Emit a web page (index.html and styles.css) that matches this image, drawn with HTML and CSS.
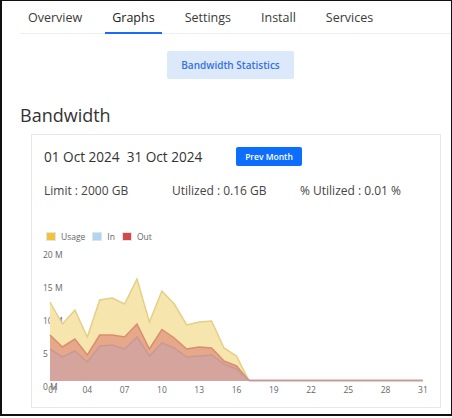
FILE: index.html
```html
<!DOCTYPE html>
<html>
<head>
<meta charset="utf-8">
<link rel="stylesheet" href="styles.css">
</head>
<body>
<div class="frame">
  <nav class="tabs">
    <a class="tab">Overview</a>
    <a class="tab active">Graphs</a>
    <a class="tab">Settings</a>
    <a class="tab">Install</a>
    <a class="tab">Services</a>
  </nav>
  <main class="content">
    <div class="sub">
      <button class="pill">Bandwidth Statistics</button>
    </div>
    <h2 class="title">Bandwidth</h2>
    <section class="card">
      <div class="card-head">
        <span class="dates"><span>01 Oct 2024</span><span>31 Oct 2024</span></span>
        <button class="prev">Prev Month</button>
      </div>
      <div class="stats">
        <span>Limit : 2000 GB</span>
        <span>Utilized : 0.16 GB</span>
        <span>% Utilized : 0.01 %</span>
      </div>
      <div class="legend">
        <span class="item"><i class="sw sw-usage"></i>Usage</span>
        <span class="item"><i class="sw sw-in"></i>In</span>
        <span class="item"><i class="sw sw-out"></i>Out</span>
      </div>
      <svg class="chart" width="408" height="160" viewBox="32 246 408 160">
        <g class="ylab">
          <text x="43" y="257">20 M</text>
          <text x="43" y="290">15 M</text>
          <text x="43" y="323">10 M</text>
          <text x="43" y="356">5 M</text>
          <text x="43" y="389">0 M</text>
        </g>
        <polygon class="a-usage" points="50,382 50,303 62.4,325 74.9,311 87.3,338 99.7,301 112.2,299 124.6,305 137,280 149.4,323 161.9,292 174.3,305 186.7,326 199.2,323 211.6,322 224,349 236.5,357 248.9,381.5 422.9,381.5 422.9,382"/>
        <polyline class="l-usage" points="50,303 62.4,325 74.9,311 87.3,338 99.7,301 112.2,299 124.6,305 137,280 149.4,323 161.9,292 174.3,305 186.7,326 199.2,323 211.6,322 224,349 236.5,357 248.9,381.5"/>
        <polygon class="a-out" points="50,382 50,336 62.4,348 74.9,340 87.3,356 99.7,336 112.2,336 124.6,338 137,325 149.4,350 161.9,330.5 174.3,339 186.7,350 199.2,348 211.6,349 224,362 236.5,367 248.9,381.5 248.9,382"/>
        <polyline class="l-out" points="50,336 62.4,348 74.9,340 87.3,356 99.7,336 112.2,336 124.6,338 137,325 149.4,350 161.9,330.5 174.3,339 186.7,350 199.2,348 211.6,349 224,362 236.5,367 248.9,381.5"/>
        <polygon class="a-in" points="50,382 50,350 62.4,358 74.9,352 87.3,363 99.7,347 112.2,346 124.6,350 137,338 149.4,357 161.9,344 174.3,349 186.7,358 199.2,357 211.6,356 224,365 236.5,370 248.9,381.5 248.9,382"/>
        <polyline class="l-in" points="50,350 62.4,358 74.9,352 87.3,363 99.7,347 112.2,346 124.6,350 137,338 149.4,357 161.9,344 174.3,349 186.7,358 199.2,357 211.6,356 224,365 236.5,370 248.9,381.5"/>
        <line class="flat" x1="248.9" y1="381.6" x2="422.9" y2="381.6"/>
        <g class="xlab">
          <text x="53" y="392">01</text>
          <text x="87.3" y="392">04</text>
          <text x="124.6" y="392">07</text>
          <text x="161.9" y="392">10</text>
          <text x="199.2" y="392">13</text>
          <text x="236.5" y="392">16</text>
          <text x="273.8" y="392">19</text>
          <text x="311.1" y="392">22</text>
          <text x="348.3" y="392">25</text>
          <text x="385.6" y="392">28</text>
          <text x="422.9" y="392">31</text>
        </g>
      </svg>
    </section>
  </main>
</div>
</body>
</html>
```

FILE: styles.css
```css
* { box-sizing: border-box; }
html, body { margin: 0; padding: 0; background: #fff; }
body { font-family: "Open Sans", "Liberation Sans", sans-serif; color: #333; }

.frame {
  width: 452px;
  height: 416px;
  border: 2px solid #111;
  border-top-width: 1px;
  border-right-width: 1px;
  overflow: hidden;
}

.tabs {
  display: flex;
  gap: 16px;
  margin-left: 18px;
  padding-left: 1px;
  border-bottom: 1px solid #eceef1;
}
.tab {
  display: block;
  font-size: 12.5px;
  line-height: 20px;
  padding: 7px 7px 4px;
  border-bottom: 2px solid transparent;
  margin-bottom: -1px;
  color: #3a3a3a;
  cursor: pointer;
}
.tab.active {
  color: #222;
  border-bottom-color: #1a6cf5;
}

.content {
  padding: 0 10px 0 18px;
}
.sub {
  display: flex;
  justify-content: center;
  margin-top: 17px;
}
.pill {
  font-family: inherit;
  height: 28px;
  padding: 0 14px;
  border: none;
  border-radius: 2px;
  background: #dce9fb;
  color: #3570e4;
  font-size: 10px;
  font-weight: 600;
}
.title {
  margin: 24px 0 0;
  font-size: 18px;
  line-height: 24px;
  font-weight: 400;
  color: #333;
}
.card {
  margin: 7px 0 0 11px;
  width: 410px;
  height: 274px;
  border: 1px solid #e8e8e8;
  padding: 12px 0 0 12px;
  overflow: hidden;
}
.card-head {
  display: flex;
  align-items: center;
  height: 19px;
}
.dates {
  display: flex;
  gap: 7px;
  font-size: 13.6px;
  color: #333;
  width: 192px;
}
.prev {
  font-family: inherit;
  height: 19px;
  width: 66px;
  padding: 0;
  border: none;
  border-radius: 2px;
  background: #0d6efd;
  color: #fff;
  font-size: 8.5px;
  font-weight: 600;
}
.stats {
  display: grid;
  grid-template-columns: 128px 128px 128px;
  margin-top: 16px;
  font-size: 12px;
  line-height: 18px;
  color: #444;
}
.legend {
  display: flex;
  gap: 7px;
  margin-top: 31px;
  padding-left: 2px;
  height: 10px;
  align-items: center;
  font-size: 8.5px;
  color: #666;
}
.item { display: flex; align-items: center; gap: 5px; }
.sw {
  display: block;
  width: 10px;
  height: 9px;
  border: 1px solid #e4e4e4;
}
.sw-usage { background: #f1c33b; }
.sw-in { background: #acd6f4; }
.sw-out { background: #d4484a; }

.chart {
  display: block;
  margin: 4px 0 0 -12px;
}
.chart text {
  font-family: "Open Sans", "Liberation Sans", sans-serif;
  font-size: 8.5px;
  fill: #666;
  dominant-baseline: middle;
}
.xlab text { text-anchor: middle; }
.a-usage { fill: #f7e5ae; }
.l-usage { fill: none; stroke: #e5cf86; stroke-width: 1.5; }
.a-out { fill: #e7a88a; }
.l-out { fill: none; stroke: #d98d70; stroke-width: 1.5; }
.a-in { fill: #d4a49d; }
.l-in { fill: none; stroke: #c79a97; stroke-width: 1.5; }
.flat { stroke: #c59d98; stroke-width: 2; }
```
